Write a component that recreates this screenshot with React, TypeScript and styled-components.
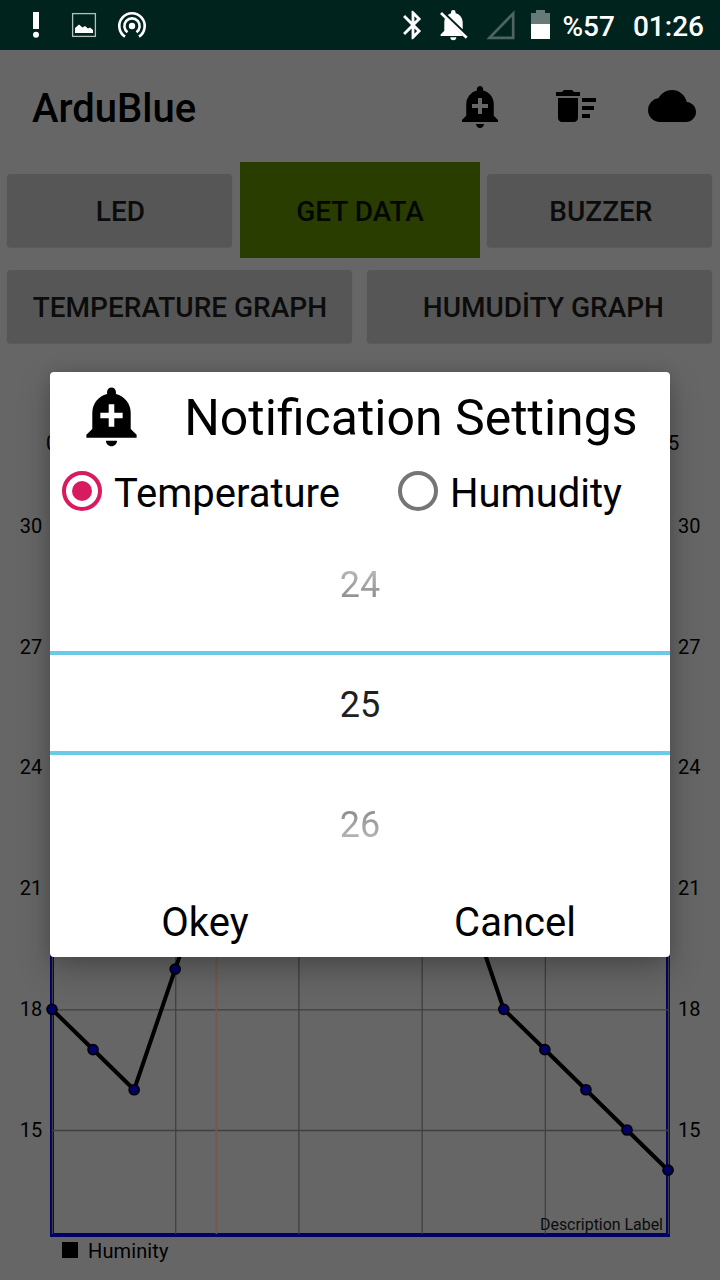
import React from 'react';
import styled, { createGlobalStyle } from 'styled-components';
import { MdAddAlert, MdBluetooth, MdCloud, MdDeleteSweep } from 'react-icons/md';

const GlobalStyle = createGlobalStyle`
  * { box-sizing: border-box; }
  body { margin: 0; background: #666; font-family: Roboto, sans-serif; color: #000; }
`;

const Screen = styled.div`
  position: relative;
  width: 720px;
  height: 1280px;
  overflow: hidden;
  display: flex;
  flex-direction: column;
  background: #666;
`;

const StatusBar = styled.header`
  height: 50px;
  flex: none;
  display: flex;
  align-items: center;
  justify-content: space-between;
  padding: 0 16px 0 16px;
  background: #00231e;
  color: #fff;
`;

const StatusGroup = styled.div`
  display: flex;
  align-items: center;
  height: 50px;
  svg { display: block; flex: none; }
`;

const StatusText = styled.span<{ $gap: number }>`
  margin-left: ${(p) => p.$gap}px;
  padding-top: 3px;
  font-size: 28px;
  font-weight: 500;
  line-height: 33px;
`;

const Toolbar = styled.div`
  height: 112px;
  flex: none;
  display: flex;
  align-items: center;
  padding: 0 24px 0 32px;
`;

const AppTitle = styled.h1`
  flex: 1;
  margin: 0;
  padding-top: 4px;
  font-size: 40px;
  font-weight: 500;
  line-height: 47px;
`;

const ToolbarActions = styled.div`
  display: flex;
  gap: 48px;
  svg { display: block; }
`;

const ButtonRow = styled.div<{ $columns: number }>`
  height: 96px;
  flex: none;
  display: grid;
  grid-template-columns: repeat(${(p) => p.$columns}, 1fr);
`;

const ButtonCell = styled.div`
  display: flex;
  padding: 12px 7.6px 11px 7.4px;
`;

const FlatButton = styled.button<{ $active?: boolean; $indent?: number }>`
  flex: 1;
  border: 0;
  padding: 2px 0 0 ${(p) => p.$indent ?? 0}px;
  font: 500 28px/33px Roboto, sans-serif;
  white-space: nowrap;
  color: ${(p) => (p.$active ? '#050800' : '#0c0c0c')};
  background: ${(p) => (p.$active ? '#293d00' : '#565656')};
  border-radius: ${(p) => (p.$active ? 0 : 4)}px;
  box-shadow: ${(p) => (p.$active ? 'none' : '0 1px 1px rgba(0, 0, 0, 0.12)')};
`;

const ChartArea = styled.main`
  flex: 1;
  svg { display: block; }
`;

const Overlay = styled.div`
  position: absolute;
  inset: 50px 0 0;
  display: flex;
  justify-content: center;
  align-items: flex-start;
  padding-top: 322px;
`;

const Dialog = styled.section`
  width: 620px;
  height: 585px;
  display: flex;
  flex-direction: column;
  background: #fff;
  border-radius: 4px;
  box-shadow: 0 14px 32px rgba(0, 0, 0, 0.25), 0 0 14px rgba(0, 0, 0, 0.12);
`;

const DialogHeader = styled.div`
  height: 90px;
  display: flex;
  align-items: center;
  padding: 0 0 0 28px;
  svg { display: block; flex: none; margin-bottom: 4px; }
`;

const DialogTitle = styled.h2`
  margin: 0 0 0 39.2px;
  padding-top: 2px;
  font-size: 50px;
  font-weight: 400;
  line-height: 58px;
  white-space: nowrap;
`;

const RadioRow = styled.div`
  height: 64px;
  display: flex;
  align-items: flex-start;
  padding: 8px 0 0 12px;
`;

const RadioOption = styled.label`
  width: 336px;
  display: flex;
  flex: none;
  gap: 12px;
  align-items: flex-start;
  font-size: 40px;
  line-height: 47px;
  &:last-child { width: auto; }
`;

const RadioMark = styled.span<{ $checked?: boolean }>`
  width: 40px;
  height: 40px;
  margin-top: 1px;
  flex: none;
  display: grid;
  place-items: center;
  border: 4px solid ${(p) => (p.$checked ? '#d81b60' : '#757575')};
  border-radius: 50%;
  &::after {
    content: '';
    width: 20px;
    height: 20px;
    border-radius: 50%;
    background: ${(p) => (p.$checked ? '#d81b60' : 'transparent')};
  }
`;

const Picker = styled.div`
  height: 360px;
  display: flex;
  flex-direction: column;
  font-size: 36px;
  line-height: 42px;
  text-align: center;
`;

const PickerItem = styled.div<{ $fade: 'up' | 'down' }>`
  height: ${(p) => (p.$fade === 'up' ? 125 : 131)}px;
  padding-top: ${(p) => (p.$fade === 'up' ? 38 : 49)}px;
  color: transparent;
  background: ${(p) =>
    p.$fade === 'up'
      ? 'linear-gradient(#b8b8b8 44px, #8c8c8c 74px)'
      : 'linear-gradient(#8c8c8c 54px, #b8b8b8 86px)'};
  background-clip: text;
  -webkit-background-clip: text;
`;

const PickerSelected = styled.div`
  height: 104px;
  border: solid #6bcae8;
  border-width: 4px 0;
  padding-top: 29px;
  color: #202020;
`;

const DialogActions = styled.div`
  flex: 1;
  display: flex;
`;

const TextAction = styled.button`
  flex: 1;
  border: 0;
  background: none;
  padding: 2px 0 0;
  font: 400 40px/47px Roboto, sans-serif;
  color: #000;
`;

const BellOffIcon = () => (
  <svg width="42" height="50" viewBox="430 0 42 50" fill="#fff">
    <path d="M445.300 17.500 463 35.900H440.600V34.600L444.300 30.800V23c0-2 .3-4 1-5.500z" />
    <path d="M447.800 14.900c.9-.8 1.900-1.300 3.200-1.700v-1a2.300 2.300 0 0 1 4.600 0v1c4.500 1.100 7.100 4.900 7.100 9.500v6.600z" />
    <path d="M441 13 466.700 37.800" stroke="#fff" strokeWidth="2.700" />
    <path d="M450.300 37.200h6a3 3 0 0 1-6 0z" />
  </svg>
);

const POINT_GAP = 41.07;
const yOf = (value: number) => 665.3 - (value - 18) * 40.23;
const xOf = (index: number) => 52 + index * POINT_GAP;
const READINGS = [18, 17, 16, 19, 22, 23, 24, 24, 24, 23, 21, 18, 17, 16, 15, 14];
const Y_TICKS = [30, 27, 24, 21, 18, 15];
const X_TICKS = [0, 3, 6, 9, 12, 15];

const Chart = () => (
  <svg width="720" height="926" viewBox="0 10 720 926" fontFamily="Roboto, sans-serif">
    <rect x="52" y="120" width="616" height="771" fill="none" stroke="#000066" strokeWidth="4" />
    <g stroke="#404040" strokeWidth="1.300">
      {X_TICKS.map((t) => (
        <line key={t} x1={xOf(t) + 0.5} x2={xOf(t) + 0.5} y1="120" y2="890" />
      ))}
      {Y_TICKS.map((t) => (
        <line key={t} x1="53" x2="668" y1={yOf(t) + 0.5} y2={yOf(t) + 0.5} />
      ))}
    </g>
    <line x1="216.300" x2="216.300" y1="120" y2="890" stroke="#74594a" strokeWidth="1.700" />
    <polyline
      points={READINGS.map((v, i) => `${xOf(i)},${yOf(v)}`).join(' ')}
      fill="none"
      stroke="#000"
      strokeWidth="4"
    />
    {READINGS.map((v, i) => (
      <circle key={i} cx={xOf(i)} cy={yOf(v)} r="5" fill="#000066" stroke="#000" strokeWidth="1.700" />
    ))}
    <g fontSize="20" fill="#000">
      <text x="51.500" y="106.300" textAnchor="middle">0</text>
      <text x="668" y="106.300" textAnchor="middle">15</text>
      {Y_TICKS.map((t) => (
        <React.Fragment key={t}>
          <text x="42.300" y={yOf(t) + (t > 18 ? 6.300 : 7)} textAnchor="end">{t}</text>
          <text x="678" y={yOf(t) + (t > 18 ? 6.300 : 7)}>{t}</text>
        </React.Fragment>
      ))}
      <text x="88" y="914" textLength="80.500">Huminity</text>
    </g>
    <text x="540" y="886" fontSize="16" textLength="123" fill="#0c0c0c">Description Label</text>
    <rect x="62" y="898" width="16" height="16" />
  </svg>
);

export default function App() {
  return (
    <Screen>
      <GlobalStyle />
      <StatusBar>
        <StatusGroup>
          <svg width="136" height="50" viewBox="16 0 136 50" fill="#fff">
            <rect x="33" y="12" width="6" height="17" />
            <circle cx="36" cy="34.800" r="3" />
            <rect x="72.600" y="13.600" width="22.800" height="22.800" fill="none" stroke="#b3bfbd" strokeWidth="1.300" />
            <path d="M75 33v-5l4-3.500 3.500 3 2.500-1.500 3 2.500 2-1 3 2.500V33z" />
            <circle cx="132" cy="26" r="3.200" />
            <path
              d="M127.500 32.200a7.650 7.650 0 1 1 9 0M125 36.600a12.700 12.700 0 1 1 14 0"
              fill="none"
              stroke="#fff"
              strokeWidth="2.600"
            />
          </svg>
        </StatusGroup>
        <StatusGroup>
          <MdBluetooth size={34} />
          <BellOffIcon />
          <svg width="91" height="50" viewBox="472 0 91 50">
            <path d="M489.500 37.800H513.200V13.500z" fill="none" stroke="#4d6562" strokeWidth="2.700" />
            <path d="M531 13h5v-3h9v3h5v11h-19z" fill="#667b78" />
            <rect x="531" y="24" width="19" height="15" fill="#fff" />
          </svg>
          <StatusText $gap={0}>%57</StatusText>
          <StatusText $gap={18}>01:26</StatusText>
        </StatusGroup>
      </StatusBar>
      <Toolbar>
        <AppTitle>ArduBlue</AppTitle>
        <ToolbarActions>
          <MdAddAlert size={48} />
          <MdDeleteSweep size={48} />
          <MdCloud size={48} />
        </ToolbarActions>
      </Toolbar>
      <ButtonRow $columns={3}>
        <ButtonCell><FlatButton $indent={1}>LED</FlatButton></ButtonCell>
        <FlatButton $active>GET DATA</FlatButton>
        <ButtonCell><FlatButton $indent={2}>BUZZER</FlatButton></ButtonCell>
      </ButtonRow>
      <ButtonRow $columns={2}>
        <ButtonCell><FlatButton>TEMPERATURE GRAPH</FlatButton></ButtonCell>
        <ButtonCell><FlatButton $indent={7}>HUMUDİTY GRAPH</FlatButton></ButtonCell>
      </ButtonRow>
      <ChartArea><Chart /></ChartArea>
      <Overlay>
        <Dialog role="dialog">
          <DialogHeader>
            <MdAddAlert size={67} />
            <DialogTitle>Notification Settings</DialogTitle>
          </DialogHeader>
          <RadioRow>
            <RadioOption><RadioMark $checked />Temperature</RadioOption>
            <RadioOption><RadioMark />Humudity</RadioOption>
          </RadioRow>
          <Picker>
            <PickerItem $fade="up">24</PickerItem>
            <PickerSelected>25</PickerSelected>
            <PickerItem $fade="down">26</PickerItem>
          </Picker>
          <DialogActions>
            <TextAction>Okey</TextAction>
            <TextAction>Cancel</TextAction>
          </DialogActions>
        </Dialog>
      </Overlay>
    </Screen>
  );
}
